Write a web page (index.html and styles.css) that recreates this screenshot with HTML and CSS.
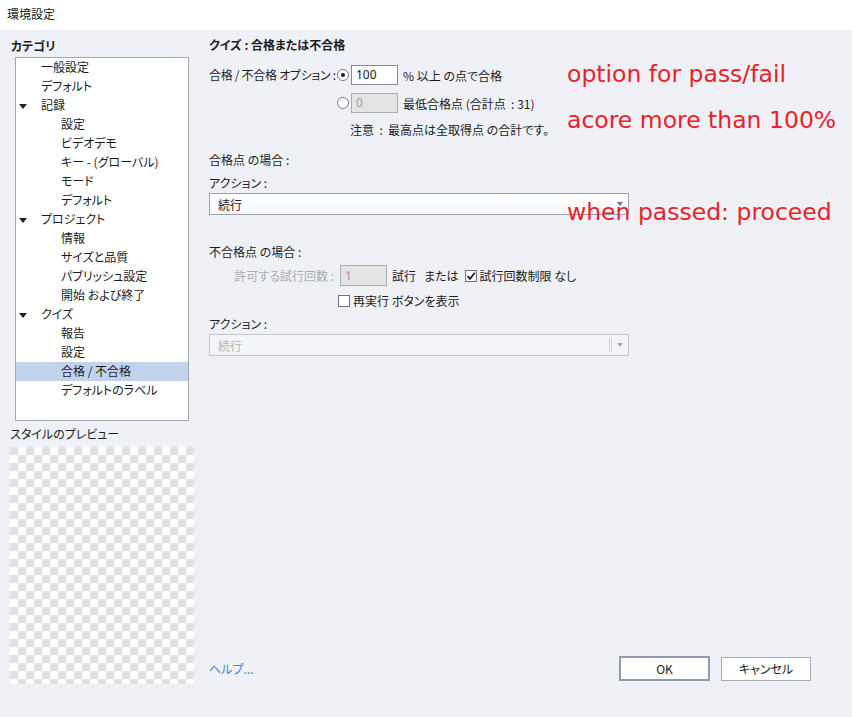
FILE: index.html
```html
<!DOCTYPE html>
<html lang="ja">
<head>
  <meta charset="UTF-8" />
  <title>環境設定</title>
  <link rel="stylesheet" href="styles.css">
</head>
<body>
  <div class="titlebar">環境設定</div>

  <div class="dialog">
    <aside class="sidebar">
      <div class="side-label bold">カテゴリ</div>
      <ul class="tree">
        <li class="lvl0"><span class="twisty"></span>一般設定</li>
        <li class="lvl0"><span class="twisty"></span>デフォルト</li>
        <li class="lvl0"><span class="twisty open"></span>記録</li>
        <li class="lvl1">設定</li>
        <li class="lvl1">ビデオデモ</li>
        <li class="lvl1">キー - (グローバル)</li>
        <li class="lvl1">モード</li>
        <li class="lvl1">デフォルト</li>
        <li class="lvl0"><span class="twisty open"></span>プロジェクト</li>
        <li class="lvl1">情報</li>
        <li class="lvl1">サイズと品質</li>
        <li class="lvl1">パブリッシュ設定</li>
        <li class="lvl1">開始 および終了</li>
        <li class="lvl0"><span class="twisty open"></span>クイズ</li>
        <li class="lvl1">報告</li>
        <li class="lvl1">設定</li>
        <li class="lvl1 selected">合格 / 不合格</li>
        <li class="lvl1">デフォルトのラベル</li>
      </ul>
      <div class="side-label preview-label">スタイルのプレビュー</div>
      <div class="preview"></div>
    </aside>

    <main class="content">
      <div class="pane">
        <div class="heading bold">クイズ : 合格または不合格</div>

        <div class="opt-grid">
          <div class="opt-label">合格 / 不合格 オプション :</div>
          <div class="opt-line">
            <span class="radio checked"></span>
            <span class="field">100</span>
            <span>% 以上 の点で合格</span>
          </div>
          <div></div>
          <div class="opt-line">
            <span class="radio"></span>
            <span class="field disabled">0</span>
            <span>最低合格点 (合計点 &nbsp;: 31)</span>
          </div>
          <div></div>
          <div class="opt-note">注意 &nbsp;: &nbsp;最高点は全取得点 の合計です。</div>
        </div>

        <div class="label section-pass">合格点 の場合 :</div>
        <div class="label action-label">アクション :</div>
        <div class="select">
          <span>続行</span>
          <span class="arrow"></span>
        </div>

        <div class="label section-fail">不合格点 の場合 :</div>
        <div class="fail-grid">
          <div class="fail-label muted">許可する試行回数 :</div>
          <div class="fail-line">
            <span class="field small disabled">1</span>
            <span class="word">試行</span>
            <span class="word">または</span>
            <span class="check checked">
              <svg width="10" height="10" viewBox="0 0 10 10"><path d="M1.5 5 L4 7.8 L8.8 1.8" fill="none" stroke="#1e1e1e" stroke-width="1.8"/></svg>
            </span>
            <span>試行回数制限 なし</span>
          </div>
          <div></div>
          <div class="retry-line">
            <span class="check"></span>
            <span>再実行 ボタンを表示</span>
          </div>
        </div>
        <div class="label action-label">アクション :</div>
        <div class="select disabled">
          <span>続行</span>
          <span class="sep"></span>
          <span class="arrow"></span>
        </div>
      </div>

      <div class="footer">
        <a class="help" href="#">ヘルプ...</a>
        <div class="buttons">
          <button class="btn default">OK</button>
          <button class="btn">キャンセル</button>
        </div>
      </div>
    </main>

    <div class="note note-option">option for pass/fail</div>
    <div class="note note-score">acore more than 100%</div>
    <div class="note note-passed">when passed: proceed</div>
  </div>
</body>
</html>
```

FILE: styles.css
```css
* {
  box-sizing: border-box;
}
body {
  margin: 0;
  width: 852px;
  height: 717px;
  overflow: hidden;
  font-family: "Noto Sans CJK JP", "Noto Sans", sans-serif;
  font-size: 12px;
  line-height: 19px;
  color: #1c1c1c;
  background-color: #eff1f7;
  font-feature-settings: "palt";
}
.bold {
  font-weight: bold;
}
.titlebar {
  height: 30px;
  padding-left: 7px;
  line-height: 28px;
  background-color: #fff;
}
.dialog {
  position: relative;
  display: flex;
  height: 687px;
}

/* left column */
.sidebar {
  width: 209px;
  padding: 6px 0 0 10px;
  flex-shrink: 0;
}
.side-label {
  height: 19px;
  padding-left: 1px;
}
.tree {
  list-style: none;
  margin: 2px 0 0 5px;
  padding: 0;
  width: 174px;
  height: 364px;
  background-color: #fff;
  border: 1px solid #a4a8b4;
}
.tree li {
  display: flex;
  align-items: center;
  height: 19px;
  padding-bottom: 2px;
  white-space: nowrap;
}
.tree .lvl1 {
  padding-left: 45px;
}
.twisty {
  width: 25px;
  height: 17px;
  flex-shrink: 0;
  position: relative;
}
.twisty.open::before {
  content: "";
  position: absolute;
  left: 3px;
  top: 8px;
  border-left: 4px solid transparent;
  border-right: 4px solid transparent;
  border-top: 5px solid #222;
}
.tree .selected {
  background-color: #c3d3ee;
}
.preview-label {
  margin-top: 3px;
  padding-left: 0;
}
.preview {
  margin-top: 4px;
  width: 184px;
  height: 237px;
  background: repeating-conic-gradient(#fff 0 25%, #e1e1e1 0 50%) 0 0 / 16px 16px;
}

/* right column */
.content {
  flex: 1;
  display: flex;
  flex-direction: column;
  justify-content: space-between;
  padding: 5px 41px 36px 0;
}
.heading {
  height: 19px;
}
.opt-grid {
  display: grid;
  grid-template-columns: 128px auto;
  row-gap: 8px;
  margin-top: 11px;
  justify-content: start;
}
.opt-label {
  height: 20px;
  line-height: 19px;
  white-space: nowrap;
  letter-spacing: -0.3px;
}
.opt-line {
  display: flex;
  align-items: center;
  height: 20px;
  white-space: nowrap;
}
.opt-note {
  margin-top: -1px;
  padding-left: 13px;
  height: 19px;
  white-space: nowrap;
}
.radio {
  width: 12px;
  height: 12px;
  border: 1px solid #7c7c84;
  border-radius: 50%;
  background-color: #fff;
  margin-right: 2px;
  position: relative;
}
.radio.checked::after {
  content: "";
  position: absolute;
  left: 3px;
  top: 3px;
  width: 4px;
  height: 4px;
  border-radius: 50%;
  background-color: #1a1a1a;
}
.field {
  width: 47px;
  height: 20px;
  border: 1px solid #868a94;
  background-color: #fff;
  padding-left: 4px;
  margin-right: 5px;
  line-height: 18px;
  font-family: "Noto Sans", sans-serif;
}
.field.disabled {
  background-color: #e4e4e4;
  border-color: #adadad;
  color: #9a9a9a;
}
.field.small {
  height: 21px;
  line-height: 19px;
  margin-left: 2px;
}
.label {
  height: 19px;
}
.section-pass {
  margin-top: 11px;
}
.action-label {
  margin-top: 4px;
}
.section-fail {
  margin-top: 27px;
}
.select {
  margin-top: 1px;
  width: 420px;
  height: 22px;
  border: 1px solid #9ca2b2;
  background: linear-gradient(#fff, #f7f8fb);
  display: flex;
  align-items: center;
  padding-left: 8px;
  position: relative;
}
.select .arrow {
  position: absolute;
  right: 5px;
  top: 8px;
  border-left: 3.5px solid transparent;
  border-right: 3.5px solid transparent;
  border-top: 4px solid #687082;
}
.select.disabled {
  background: #f4f5f8;
  border-color: #c4c6cc;
  color: #b4b4b8;
}
.select.disabled .arrow {
  border-top-color: #a8aab0;
}
.select .sep {
  position: absolute;
  right: 16px;
  top: 3px;
  width: 3px;
  height: 14px;
  border-left: 1px solid #d0d2d6;
  border-right: 1px solid #d0d2d6;
}
.fail-grid {
  display: grid;
  grid-template-columns: 129px auto;
  row-gap: 5px;
  margin-top: 4px;
  justify-content: start;
}
.fail-label {
  text-align: right;
  padding-right: 4px;
  height: 21px;
  line-height: 21px;
  white-space: nowrap;
}
.muted {
  color: #ababb0;
}
.fail-line {
  display: flex;
  align-items: center;
  height: 21px;
  white-space: nowrap;
}
.word {
  margin-right: 8px;
}
.retry-line {
  display: flex;
  align-items: center;
  height: 19px;
  white-space: nowrap;
}
.check {
  width: 12px;
  height: 12px;
  border: 1px solid #727278;
  background-color: #fff;
  margin-right: 3px;
  display: flex;
  align-items: center;
  justify-content: center;
}
.fail-line .check {
  margin-left: -2px;
}
.footer {
  display: flex;
  justify-content: space-between;
  align-items: center;
  height: 25px;
}
.help {
  color: #4e7fc0;
  text-decoration: none;
}
.buttons {
  display: flex;
  gap: 11px;
  align-items: center;
}
.btn {
  width: 91px;
  height: 25px;
  font-family: "Noto Sans CJK JP", "Noto Sans", sans-serif;
  font-size: 12px;
  color: #1c1c1c;
  background-color: #fff;
  border: 1px solid #a6aab4;
  font-feature-settings: "palt";
  padding: 0;
}
.btn.default {
  border: 2px solid #9299a8;
}
.buttons .btn:last-child {
  width: 90px;
  height: 24px;
}

/* red annotations drawn over the dialog */
.note {
  position: absolute;
  left: 567px;
  font-family: "DejaVu Sans", sans-serif;
  font-size: 23.5px;
  line-height: 28px;
  color: #e8212b;
  white-space: nowrap;
}
.note-option {
  top: 30px;
}
.note-score {
  top: 76px;
}
.note-passed {
  top: 168px;
}
```
